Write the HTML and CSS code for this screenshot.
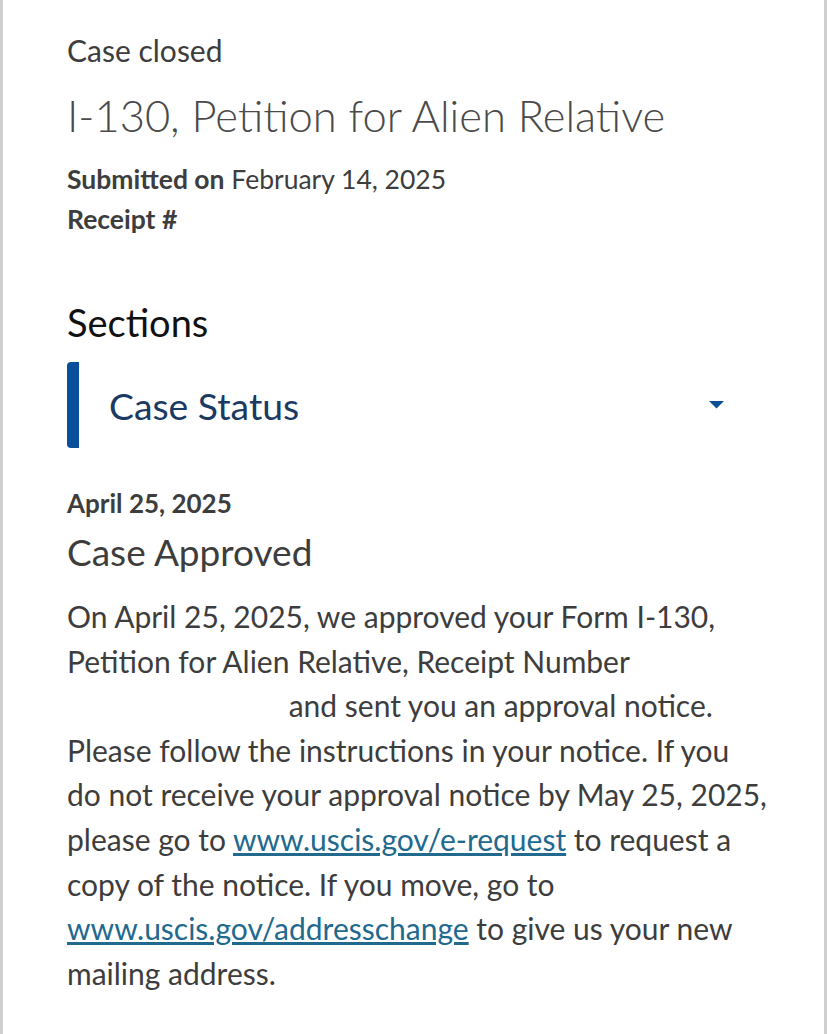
FILE: index.html
```html
<!DOCTYPE html>
<html lang="en">
<head>
  <meta charset="UTF-8">
  <meta name="viewport" content="width=device-width, initial-scale=1.0">
  <title>Case Status</title>
  <link rel="stylesheet" href="styles.css">
</head>
<body>
  <div class="page">
    <p class="case-state">Case closed</p>
    <h1 class="form-title">I-130, Petition for Alien Relative</h1>
    <p class="meta first"><b>Submitted on</b> February 14, 2025</p>
    <p class="meta"><b>Receipt #</b></p>

    <h2 class="sections">Sections</h2>
    <div class="accordion">
      <span class="accordion-label">Case Status</span>
      <svg class="caret" width="15" height="8" viewBox="0 0 15 8"><path d="M0 0 L15 0 L7.5 7.5 Z" fill="#0b4f96"/></svg>
    </div>

    <p class="status-date">April 25, 2025</p>
    <h3 class="status-title">Case Approved</h3>
    <p class="status-text">On April 25, 2025, we approved your Form I-130,<br>
      Petition for Alien Relative, Receipt Number<br>
      <span class="receipt-blank"></span> and sent you an approval notice.<br>
      Please follow the instructions in your notice. If you<br>
      do not receive your approval notice by May 25, 2025,<br>
      please go to <a href="#">www.uscis.gov/e-request</a> to request a<br>
      copy of the notice. If you move, go to<br>
      <a href="#">www.uscis.gov/addresschange</a> to give us your new<br>
      mailing address.</p>
  </div>
</body>
</html>
```

FILE: styles.css
```css
body {
  margin: 0;
  background: white;
  font-family: Lato, "Noto Sans", sans-serif;
  color: #3d3d3d;
}

.page {
  min-height: 1034px;
  box-sizing: border-box;
  border-left: 3px solid #cfcfcf;
  border-right: 3px solid #cfcfcf;
  padding: 30px 40px 0 64px;
}

.case-state {
  margin: 0;
  font-size: 30px;
  line-height: 40px;
}

.form-title {
  margin: 17px 0 0 0;
  font-size: 43.5px;
  font-weight: 300;
  line-height: 56px;
  color: #4a4a4a;
}

.meta {
  margin: 0;
  font-size: 26.5px;
  line-height: 40px;
}
.meta.first {
  margin-top: 16px;
}

.sections {
  margin: 60px 0 0 0;
  font-size: 38px;
  font-weight: 400;
  line-height: 46px;
  color: #111;
}

.accordion {
  margin: 17px 0 0 0;
  height: 86px;
  display: flex;
  align-items: center;
  border-left: 12px solid #0a4f9a;
  border-radius: 4px;
  padding: 0 60px 0 30px;
}
.accordion-label {
  flex: 1;
  font-size: 37.3px;
  color: #1a3a63;
}

.status-date {
  margin: 39px 0 0 0;
  font-size: 26px;
  font-weight: 700;
  line-height: 32px;
}

.status-title {
  margin: 11px 0 0 0;
  font-size: 37px;
  font-weight: 400;
  line-height: 44px;
}

.status-text {
  margin: 20px 0 0 0;
  font-size: 30px;
  line-height: 44.6px;
}
.status-text a {
  color: #22698e;
}
.receipt-blank {
  display: inline-block;
  width: 214px;
}
```
